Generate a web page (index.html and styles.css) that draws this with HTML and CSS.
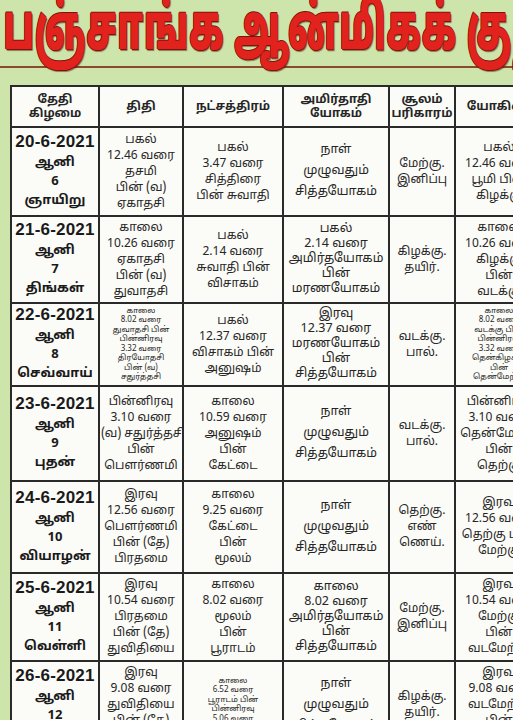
FILE: index.html
```html
<!DOCTYPE html>
<html lang="ta">
<head>
<meta charset="utf-8">
<title>பஞ்சாங்க ஆன்மிகக் குறிப்புகள்</title>
<link rel="stylesheet" href="styles.css">
</head>
<body>
<div class="page">
  <header class="banner">
    <h1 class="title">பஞ்சாங்க ஆன்மிகக் குறிப்புகள்</h1>
  </header>
  <table class="panchang">
    <colgroup>
      <col class="c-date"><col class="c-thithi"><col class="c-star"><col class="c-amirtha"><col class="c-soolam"><col class="c-yogini">
    </colgroup>
    <thead>
      <tr class="head">
        <th>தேதி<br>கிழமை</th>
        <th>திதி</th>
        <th>நட்சத்திரம்</th>
        <th>அமிர்தாதி<br>யோகம்</th>
        <th>சூலம்<br>பரிகாரம்</th>
        <th>யோகினி</th>
      </tr>
    </thead>
    <tbody>
      <tr class="r1">
        <td class="date"><b>20-6-2021</b><br>ஆனி<br>6<br>ஞாயிறு</td>
        <td>பகல்<br>12.46 வரை<br>தசமி<br>பின் (வ)<br>ஏகாதசி</td>
        <td>பகல்<br>3.47 வரை<br>சித்திரை<br>பின் சுவாதி</td>
        <td class="big">நாள்<br>முழுவதும்<br>சித்தயோகம்</td>
        <td>மேற்கு.<br>இனிப்பு</td>
        <td>பகல்<br>12.46 வரை<br>பூமி பின்<br>கிழக்கு</td>
      </tr>
      <tr class="r2">
        <td class="date"><b>21-6-2021</b><br>ஆனி<br>7<br>திங்கள்</td>
        <td>காலை<br>10.26 வரை<br>ஏகாதசி<br>பின் (வ)<br>துவாதசி</td>
        <td>பகல்<br>2.14 வரை<br>சுவாதி பின்<br>விசாகம்</td>
        <td class="big dense">பகல்<br>2.14 வரை<br>அமிர்தயோகம்<br>பின்<br>மரணயோகம்</td>
        <td>கிழக்கு.<br>தயிர்.</td>
        <td>காலை<br>10.26 வரை<br>கிழக்கு<br>பின்<br>வடக்கு</td>
      </tr>
      <tr class="r3">
        <td class="date"><b>22-6-2021</b><br>ஆனி<br>8<br>செவ்வாய்</td>
        <td class="tiny">காலை<br>8.02 வரை<br>துவாதசி பின்<br>பின்னிரவு<br>3.32 வரை<br>திரயோதசி<br>பின் (வ)<br>சதுர்த்தசி</td>
        <td>பகல்<br>12.37 வரை<br>விசாகம் பின்<br>அனுஷம்</td>
        <td class="big dense">இரவு<br>12.37 வரை<br>மரணயோகம்<br>பின்<br>சித்தயோகம்</td>
        <td>வடக்கு.<br>பால்.</td>
        <td class="tiny">காலை<br>8.02 வரை<br>வடக்கு பின்<br>பின்னிரவு<br>3.32 வரை<br>தென்கிழக்கு<br>பின்<br>தென்மேற்கு</td>
      </tr>
      <tr class="r4">
        <td class="date"><b>23-6-2021</b><br>ஆனி<br>9<br>புதன்</td>
        <td>பின்னிரவு<br>3.10 வரை<br>(வ) சதுர்த்தசி<br>பின்<br>பௌர்ணமி</td>
        <td>காலை<br>10.59 வரை<br>அனுஷம்<br>பின்<br>கேட்டை</td>
        <td class="big">நாள்<br>முழுவதும்<br>சித்தயோகம்</td>
        <td>வடக்கு.<br>பால்.</td>
        <td>பின்னிரவு<br>3.10 வரை<br>தென்மேற்கு<br>பின்<br>தெற்கு</td>
      </tr>
      <tr class="r5">
        <td class="date"><b>24-6-2021</b><br>ஆனி<br>10<br>வியாழன்</td>
        <td>இரவு<br>12.56 வரை<br>பௌர்ணமி<br>பின் (தே)<br>பிரதமை</td>
        <td>காலை<br>9.25 வரை<br>கேட்டை<br>பின்<br>மூலம்</td>
        <td class="big">நாள்<br>முழுவதும்<br>சித்தயோகம்</td>
        <td>தெற்கு.<br>எண்<br>ணெய்.</td>
        <td>இரவு<br>12.56 வரை<br>தெற்கு பின்<br>மேற்கு</td>
      </tr>
      <tr class="r6">
        <td class="date"><b>25-6-2021</b><br>ஆனி<br>11<br>வெள்ளி</td>
        <td>இரவு<br>10.54 வரை<br>பிரதமை<br>பின் (தே)<br>துவிதியை</td>
        <td>காலை<br>8.02 வரை<br>மூலம்<br>பின்<br>பூராடம்</td>
        <td class="big dense">காலை<br>8.02 வரை<br>அமிர்தயோகம்<br>பின்<br>சித்தயோகம்</td>
        <td>மேற்கு.<br>இனிப்பு</td>
        <td>இரவு<br>10.54 வரை<br>மேற்கு<br>பின்<br>வடமேற்கு</td>
      </tr>
      <tr class="r7">
        <td class="date"><b>26-6-2021</b><br>ஆனி<br>12<br>சனி</td>
        <td>இரவு<br>9.08 வரை<br>துவிதியை<br>பின் (தே)<br>திருதியை</td>
        <td class="tiny">காலை<br>6.52 வரை<br>பூராடம் பின்<br>பின்னிரவு<br>5.06 வரை<br>உத்திராடம்</td>
        <td class="big">நாள்<br>முழுவதும்<br>சித்தயோகம்</td>
        <td>கிழக்கு.<br>தயிர்.</td>
        <td>இரவு<br>9.08 வரை<br>வடமேற்கு<br>பின்<br>வடக்கு</td>
      </tr>
    </tbody>
  </table>
</div>
</body>
</html>
```

FILE: styles.css
```css
html, body {
  margin: 0;
  padding: 0;
  background: #cde4aa;
  overflow: hidden;
}

.page {
  width: 513px;
  height: 720px;
  overflow: hidden;
  font-family: "Noto Sans Tamil", "Lohit Tamil", "Noto Sans", "DejaVu Sans", sans-serif;
  color: #262626;
}

.banner {
  height: 66px;
  border-bottom: 2px solid #8a4a2c;
  overflow: visible;
  white-space: nowrap;
}

.title {
  margin: 0;
  padding-left: 6px;
  font-size: 64px;
  line-height: 66px;
  font-weight: 900;
  color: #e1221d;
  letter-spacing: 1px;
  text-shadow: 1px 1px 0 #7a1410, -1px 0 0 #7a1410, 0 -1px 0 #7a1410, 2px 2px 1px rgba(90,20,10,0.5);
  transform: scaleX(0.56);
  transform-origin: 0 0;
}

.panchang {
  margin: 17px 0 0 10px;
  border-collapse: collapse;
  table-layout: fixed;
  width: 532px;
  background: #fbfbf7;
}

.c-date { width: 88px; }
.c-thithi { width: 84px; }
.c-star { width: 100px; }
.c-amirtha { width: 106px; }
.c-soolam { width: 66px; }
.c-yogini { width: 88px; }

.panchang th,
.panchang td {
  border: 2px solid #2a2a2a;
  text-align: center;
  vertical-align: middle;
  padding: 0 1px;
  font-size: 12px;
  line-height: 16px;
  white-space: nowrap;
  overflow: hidden;
}

.panchang th {
  font-weight: 700;
  font-size: 12px;
  line-height: 14px;
}

.head { height: 41px; }
.r1 { height: 89px; }
.r2 { height: 87px; }
.r3 { height: 83px; }
.r4 { height: 95px; }
.r5 { height: 92px; }
.r6 { height: 88px; }
.r7 { height: 88px; }

.panchang td.date {
  font-size: 13px;
  font-weight: 700;
  line-height: 19px;
  color: #1a1a1a;
}

.date b {
  font-family: "Liberation Sans", Arial, sans-serif;
  font-size: 17px;
  font-weight: 700;
  letter-spacing: 0.2px;
}

.panchang td.big {
  font-size: 12.5px;
  line-height: 21px;
}

.panchang td.big.dense {
  line-height: 15px;
}

.panchang td.tiny {
  font-size: 8px;
  line-height: 9.5px;
}
```
